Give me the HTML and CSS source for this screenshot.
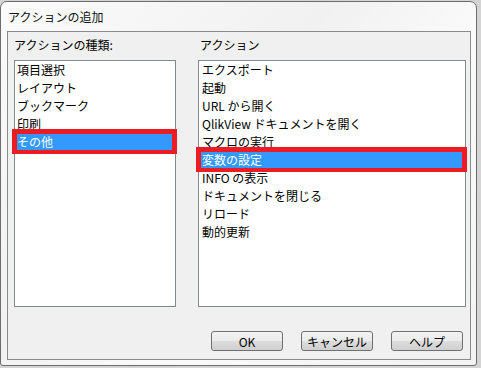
FILE: index.html
```html
<!DOCTYPE html>
<html lang="ja">
<head>
  <meta charset="UTF-8" />
  <title>アクションの追加</title>
  <link rel="stylesheet" href="styles.css">
</head>
<body>
  <div class="dialog">
    <div class="title">アクションの追加</div>

    <div class="panel">
      <div class="columns">
        <div class="col">
          <div class="label">アクションの種類:</div>
          <ul class="list list-left">
            <li>項目選択</li>
            <li>レイアウト</li>
            <li>ブックマーク</li>
            <li>印刷</li>
            <li class="selected">その他</li>
          </ul>
        </div>
        <div class="col">
          <div class="label label-right">アクション</div>
          <ul class="list">
            <li>エクスポート</li>
            <li>起動</li>
            <li>URL から開く</li>
            <li>QlikView ドキュメントを開く</li>
            <li>マクロの実行</li>
            <li class="selected">変数の設定</li>
            <li>INFO の表示</li>
            <li>ドキュメントを閉じる</li>
            <li>リロード</li>
            <li>動的更新</li>
          </ul>
        </div>
      </div>

      <div class="buttons">
        <button>OK</button>
        <button>キャンセル</button>
        <button>ヘルプ</button>
      </div>
    </div>
  </div>
</body>
</html>
```

FILE: styles.css
```css
body {
  margin: 0;
  background: #d4d4d4;
  font-family: "Noto Sans CJK JP", "Noto Sans", sans-serif;
  font-size: 12px;
  color: #000;
}

.dialog {
  box-sizing: border-box;
  width: 477px;
  height: 365px;
  margin-top: 1px;
  padding: 0 5px 5px 6px;
  border: 1px solid #6d6d6d;
  border-radius: 7px 7px 3px 3px;
  background: linear-gradient(135deg, #fbfbfb 0%, #f1f1f1 40%, #fafafa 60%, #f3f3f3 100%);
}

.title {
  height: 29px;
  line-height: 30px;
  padding-left: 1px;
  font-size: 12px;
  color: #111;
}

.panel {
  box-sizing: border-box;
  height: 329px;
  padding: 5px 4px 0 6px;
  border: 1px solid #8a8a8a;
  background: #f0f0f0;
}

.columns {
  display: grid;
  grid-template-columns: 162px 268px;
  gap: 22px;
}

.label {
  height: 16px;
  line-height: 16px;
  margin-bottom: 7px;
}

.label-right {
  padding-left: 2px;
}

.list {
  box-sizing: border-box;
  height: 247px;
  margin: 0;
  padding: 0;
  list-style: none;
  border: 1px solid #828790;
  background: #fff;
}

.list li {
  position: relative;
  height: 18px;
  line-height: 18px;
  padding-left: 3px;
  white-space: nowrap;
}

.list-left li {
  padding-left: 2px;
}

.list li.selected {
  background: #3399ff;
  color: #fff;
}

/* red annotation box around the selected row */
.list li.selected::after {
  content: "";
  position: absolute;
  top: -4px;
  bottom: -3px;
  left: -3px;
  right: -2px;
  border: 5px solid #ed1c24;
  border-bottom-width: 4px;
}

.buttons {
  display: flex;
  justify-content: flex-end;
  gap: 18px;
  margin-top: 24px;
  padding-right: 3px;
}

button {
  box-sizing: border-box;
  width: 72px;
  height: 20px;
  padding: 0;
  border: 1px solid #707070;
  border-radius: 3px;
  background: linear-gradient(#f2f2f2 0%, #ebebeb 50%, #dddddd 51%, #cfcfcf 100%);
  font-family: "Noto Sans CJK JP", "Noto Sans", sans-serif;
  font-size: 12px;
  color: #000;
}
```
